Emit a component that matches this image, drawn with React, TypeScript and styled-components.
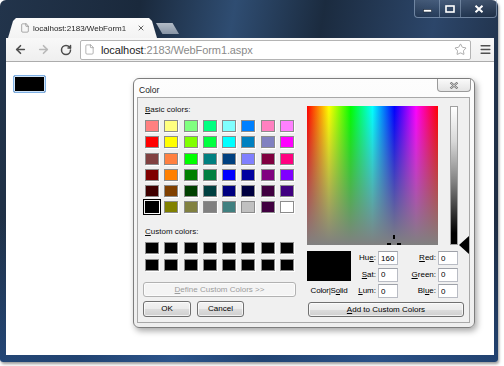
import { Fragment } from 'react';
import styled, { createGlobalStyle } from 'styled-components';
import { ArrowLeft, ArrowRight, RotateCw, Star, File, Menu, X } from 'lucide-react';

const GlobalStyle = createGlobalStyle`
  html, body {
    margin: 0;
    padding: 0;
    background: #fff;
  }
  body {
    font-family: "Liberation Sans", Arial, sans-serif;
  }
`;

const basicColors = [
  '#FF8080', '#FFFF80', '#80FF80', '#00FF80', '#80FFFF', '#0080FF', '#FF80C0', '#FF80FF',
  '#FF0000', '#FFFF00', '#80FF00', '#00FF40', '#00FFFF', '#0080C0', '#8080C0', '#FF00FF',
  '#804040', '#FF8040', '#00FF00', '#008080', '#004080', '#8080FF', '#800040', '#FF0080',
  '#800000', '#FF8000', '#008000', '#008040', '#0000FF', '#0000A0', '#800080', '#8000FF',
  '#400000', '#804000', '#004000', '#004040', '#000080', '#000040', '#400040', '#400080',
  '#000000', '#808000', '#808040', '#808080', '#408080', '#C0C0C0', '#400040', '#FFFFFF',
];

const Screen = styled.div`
  width: 504px;
  height: 366px;
  overflow: hidden;
  background: #fff;
`;

const Window = styled.div`
  width: 498px;
  height: 362px;
  box-sizing: border-box;
  display: flex;
  flex-direction: column;
  padding: 0 4px 7px 6px;
  border-radius: 6px 6px 3px 3px;
  background:
    linear-gradient(180deg, rgba(0, 0, 0, 0) 60%, rgba(40, 90, 160, 0.55) 100%),
    linear-gradient(100deg, #22344b 0%, #1a293c 25%, #2f4d72 42%, #1b2b3f 58%, #2c466a 78%, #1a2638 100%);
  box-shadow: 1px 2px 3px rgba(0, 0, 0, 0.4);
`;

const TopStrip = styled.div`
  height: 38px;
  display: flex;
  align-items: flex-start;
`;

const Tabs = styled.div`
  display: flex;
  align-items: flex-end;
  height: 100%;
  padding-left: 2px;
`;

const Tab = styled.div`
  width: 149px;
  height: 20px;
  box-sizing: border-box;
  display: flex;
  align-items: center;
  padding: 0 12px 0 12px;
  gap: 2px;
  background: linear-gradient(#fbfbfb, #f3f3f3);
  clip-path: polygon(0 100%, 5px 3px, 8px 0, calc(100% - 8px) 0, calc(100% - 5px) 3px, 100% 100%);
  color: #7a7a7a;
`;

const TabTitle = styled.span`
  flex: 1;
  min-width: 0;
  overflow: hidden;
  font-size: 8px;
  color: #1e1e1e;
  white-space: nowrap;
  padding-left: 1px;
  -webkit-mask-image: linear-gradient(90deg, #000 88%, rgba(0, 0, 0, 0.2) 100%);
  mask-image: linear-gradient(90deg, #000 88%, rgba(0, 0, 0, 0.2) 100%);
`;

const TabClose = styled.span`
  display: flex;
  flex-shrink: 0;
  color: #444;
`;

const NewTab = styled.div`
  width: 23px;
  height: 11px;
  margin: 0 0 4px -1px;
  background: linear-gradient(#b3bcc7, #8794a5);
  clip-path: polygon(0 0, 72% 0, 100% 100%, 28% 100%);
`;

const Controls = styled.div`
  display: flex;
  margin-left: auto;
  margin-right: -3px;
  height: 17px;
  border: 1px solid rgba(170, 190, 215, 0.55);
  border-top: none;
  border-radius: 0 0 4px 4px;
  overflow: hidden;
`;

const Control = styled.div<{ $w: number }>`
  width: ${(p) => p.$w}px;
  display: flex;
  align-items: center;
  justify-content: center;
  background: linear-gradient(rgba(255, 255, 255, 0.12), rgba(0, 0, 0, 0.15));
  & + & {
    border-left: 1px solid rgba(170, 190, 215, 0.45);
  }
`;

const Toolbar = styled.div`
  height: 24px;
  box-sizing: border-box;
  display: flex;
  align-items: center;
  padding-left: 8px;
  background: linear-gradient(#f8f8f8, #efefef);
  border-bottom: 1px solid #acacac;
  gap: 10px;
`;

const NavIcon = styled.span<{ $muted?: boolean }>`
  display: flex;
  color: ${(p) => (p.$muted ? '#b8b8b8' : '#4d4d4d')};
`;

const Omnibox = styled.div`
  width: 391px;
  height: 20px;
  box-sizing: border-box;
  margin-left: -2px;
  display: flex;
  align-items: center;
  padding: 0 3px 0 3px;
  gap: 6px;
  background: #fff;
  border: 1px solid #b4b4b4;
  border-radius: 2px;
  color: #8a8a8a;
`;

const Url = styled.span`
  font-size: 11px;
  color: #8a8a8a;
  letter-spacing: -0.1px;
  b {
    font-weight: normal;
    color: #1e1e1e;
  }
`;

const StarSlot = styled.span`
  display: flex;
  margin-left: auto;
  color: #8a8a8a;
`;

const MenuSlot = styled.span`
  display: flex;
  margin-left: -2px;
  color: #505050;
`;

const Content = styled.div`
  flex: 1;
  position: relative;
  background: #fff;
  padding: 13px 0 0 7px;
`;

const ColorField = styled.div`
  width: 33px;
  height: 18px;
  box-sizing: border-box;
  border: 1px solid #7fb0e4;
  border-radius: 2px;
  background: #000;
  box-shadow: inset 0 0 0 1px #cfe3f7;
`;

const Dialog = styled.div`
  position: absolute;
  left: 127px;
  top: 16px;
  width: 342px;
  height: 250px;
  box-sizing: border-box;
  display: flex;
  flex-direction: column;
  padding: 0 4px 4px 3px;
  border: 1px solid #7d7d7d;
  border-radius: 6px;
  background: linear-gradient(#fdfdfd, #eeeeee);
  box-shadow: 2px 3px 6px rgba(0, 0, 0, 0.35);
  font-size: 8px;
  color: #000;
`;

const TitleBar = styled.div`
  height: 18px;
  display: flex;
  align-items: flex-start;
`;

const Title = styled.span`
  font-size: 8.5px;
  color: #222;
  padding: 6px 0 0 2px;
`;

const CloseBtn = styled.div`
  margin-left: auto;
  margin-right: -1px;
  width: 34px;
  height: 13px;
  box-sizing: border-box;
  display: flex;
  align-items: center;
  justify-content: center;
  border: 1px solid #9a9a9a;
  border-top: none;
  border-radius: 0 0 4px 4px;
  background: linear-gradient(#fafafa, #e4e4e4);
`;

const Panel = styled.div`
  flex: 1;
  box-sizing: border-box;
  display: flex;
  gap: 11px;
  padding-left: 7px;
  border: 1px solid #a8a8a8;
  background: #f0f0f0;
`;

const LeftCol = styled.div`
  width: 151px;
  display: flex;
  flex-direction: column;
  padding-top: 7px;
`;

const Caption = styled.div`
  height: 10px;
  line-height: 10px;
  font-size: 8px;
  color: #111;
`;

const Mn = styled.span`
  text-decoration: underline;
`;

const Swatches = styled.div<{ $after: number }>`
  display: grid;
  grid-template-columns: repeat(8, 14px);
  grid-auto-rows: 12px;
  column-gap: 5.3px;
  row-gap: 4.3px;
  margin-top: 5px;
  margin-bottom: ${(p) => p.$after}px;
`;

const Swatch = styled.div<{ $c: string; $sel?: boolean }>`
  box-sizing: border-box;
  background: ${(p) => p.$c};
  border: 1px solid ${(p) => (p.$sel ? '#000' : '#8c8c8c')};
  box-shadow: 1px 1px 0 #ffffff;
  outline: ${(p) => (p.$sel ? '1px solid #000' : 'none')};
  outline-offset: 1px;
`;

const Btn = styled.button<{ $w: number; $h?: number }>`
  width: ${(p) => p.$w}px;
  height: ${(p) => p.$h ?? 16}px;
  box-sizing: border-box;
  padding: 0;
  font-family: "Liberation Sans", Arial, sans-serif;
  font-size: 8px;
  color: #000;
  border: 1px solid #707070;
  border-radius: 3px;
  background: linear-gradient(#f3f3f3 0%, #ebebeb 50%, #dddddd 51%, #cfcfcf 100%);
  box-shadow: inset 0 0 0 1px rgba(255, 255, 255, 0.7);
  &:disabled {
    color: #9c9c9c;
    border-color: #b2b2b2;
    background: #f4f4f4;
  }
`;

const ButtonStack = styled.div`
  display: flex;
  flex-direction: column;
  gap: 4px;
  margin-left: -2px;
`;

const ButtonRow = styled.div`
  display: flex;
  gap: 6px;
`;

const RightCol = styled.div`
  width: 162px;
  display: flex;
  flex-direction: column;
  padding-top: 8px;
`;

const SpectrumRow = styled.div`
  height: 139px;
  display: flex;
`;

const Spectrum = styled.div`
  position: relative;
  width: 131px;
  height: 139px;
  background:
    linear-gradient(180deg, rgba(128, 128, 128, 0) 0%, #808080 100%),
    linear-gradient(90deg, #ff0000 0%, #ffff00 16.7%, #00ff00 33.3%, #00ffff 50%, #0000ff 66.7%, #ff00ff 83.3%, #ff0000 100%);
`;

const Crosshair = styled.svg`
  position: absolute;
  left: 80px;
  bottom: 0;
`;

const LumBar = styled.div`
  width: 8px;
  margin-left: 12px;
  box-sizing: border-box;
  border: 1px solid #a0a0a0;
  background: linear-gradient(#ffffff 0%, #d8d8d8 25%, #808080 55%, #000 92%, #000 100%);
`;

const ArrowSlot = styled.div`
  position: relative;
  width: 11px;
`;

const LumArrow = styled.svg`
  position: absolute;
  left: 1px;
  bottom: -9px;
`;

const Fields = styled.div`
  display: grid;
  grid-template-columns: 44px 27px 20px 40px 20px;
  grid-template-rows: repeat(3, 14px);
  row-gap: 2.5px;
  margin-top: 6px;
`;

const Preview = styled.div`
  grid-row: 1 / span 2;
  grid-column: 1;
  background: #000;
  margin-bottom: 0.5px;
`;

const PreviewLabel = styled.div`
  grid-row: 3;
  grid-column: 1;
  text-align: center;
  line-height: 14px;
  font-size: 8px;
  letter-spacing: -0.2px;
  white-space: nowrap;
`;

const FieldLabel = styled.label<{ $row: number; $col: number }>`
  grid-row: ${(p) => p.$row};
  grid-column: ${(p) => p.$col};
  text-align: right;
  padding-right: 2px;
  line-height: 14px;
  font-size: 8px;
`;

const NumBox = styled.input<{ $row: number; $col: number }>`
  grid-row: ${(p) => p.$row};
  grid-column: ${(p) => p.$col};
  width: 20px;
  height: 14px;
  box-sizing: border-box;
  padding: 0 2px;
  margin: 0;
  border: 1px solid #b9bcc4;
  border-top-color: #9ea1a8;
  background: #fff;
  font-family: "Liberation Sans", Arial, sans-serif;
  font-size: 8px;
  color: #000;
  outline: none;
`;

const AddRow = styled.div`
  margin-top: 4px;
  padding-left: 1px;
`;

const fields = [
  { a: <>Hu<Mn>e</Mn>:</>, av: '160', b: <><Mn>R</Mn>ed:</>, bv: '0' },
  { a: <><Mn>S</Mn>at:</>, av: '0', b: <><Mn>G</Mn>reen:</>, bv: '0' },
  { a: <><Mn>L</Mn>um:</>, av: '0', b: <>Bl<Mn>u</Mn>e:</>, bv: '0' },
];

export default function App() {
  return (
    <Screen>
      <GlobalStyle />
      <Window>
        <TopStrip>
          <Tabs>
            <Tab>
              <File size={10} strokeWidth={1.5} />
              <TabTitle>localhost:2183/WebForm1</TabTitle>
              <TabClose>
                <X size={8} strokeWidth={2.5} />
              </TabClose>
            </Tab>
            <NewTab />
          </Tabs>
          <Controls>
            <Control $w={24}>
              <svg width="9" height="8" viewBox="0 0 9 8">
                <rect x="0.5" y="4.5" width="8" height="2.5" fill="#fff" stroke="#1a2535" strokeWidth="0.6" />
              </svg>
            </Control>
            <Control $w={20}>
              <svg width="10" height="8" viewBox="0 0 10 8">
                <rect x="1" y="1" width="8" height="6" fill="none" stroke="#fff" strokeWidth="1.6" />
              </svg>
            </Control>
            <Control $w={35}>
              <svg width="10" height="8" viewBox="0 0 10 8">
                <path d="M1.5 0.8 L8.5 7.2 M8.5 0.8 L1.5 7.2" stroke="#fff" strokeWidth="2" />
              </svg>
            </Control>
          </Controls>
        </TopStrip>
        <Toolbar>
          <NavIcon>
            <ArrowLeft size={13} strokeWidth={3} />
          </NavIcon>
          <NavIcon $muted>
            <ArrowRight size={13} strokeWidth={3} />
          </NavIcon>
          <NavIcon>
            <RotateCw size={12} strokeWidth={3} />
          </NavIcon>
          <Omnibox>
            <File size={11} strokeWidth={1.4} />
            <Url>
              <b>localhost</b>:2183/WebForm1.aspx
            </Url>
            <StarSlot>
              <Star size={13} strokeWidth={1.3} />
            </StarSlot>
          </Omnibox>
          <MenuSlot>
            <Menu size={13} strokeWidth={2.8} />
          </MenuSlot>
        </Toolbar>
        <Content>
          <ColorField />
          <Dialog>
            <TitleBar>
              <Title>Color</Title>
              <CloseBtn>
                <svg width="10" height="7" viewBox="0 0 10 7">
                  <path d="M1.5 0.5 L8.5 6.5 M8.5 0.5 L1.5 6.5" stroke="#6b6b6b" strokeWidth="2.2" />
                  <path d="M1.5 0.5 L8.5 6.5 M8.5 0.5 L1.5 6.5" stroke="#f4f4f4" strokeWidth="0.8" />
                </svg>
              </CloseBtn>
            </TitleBar>
            <Panel>
              <LeftCol>
                <Caption>
                  <Mn>B</Mn>asic colors:
                </Caption>
                <Swatches $after={14}>
                  {basicColors.map((c, i) => (
                    <Swatch key={i} $c={c} $sel={i === 40} />
                  ))}
                </Swatches>
                <Caption>
                  <Mn>C</Mn>ustom colors:
                </Caption>
                <Swatches $after={11}>
                  {Array.from({ length: 16 }, (_, i) => (
                    <Swatch key={i} $c="#000" />
                  ))}
                </Swatches>
                <ButtonStack>
                  <Btn $w={153} $h={15} disabled>
                    <Mn>D</Mn>efine Custom Colors &gt;&gt;
                  </Btn>
                  <ButtonRow>
                    <Btn $w={48}>OK</Btn>
                    <Btn $w={47}>Cancel</Btn>
                  </ButtonRow>
                </ButtonStack>
              </LeftCol>
              <RightCol>
                <SpectrumRow>
                  <Spectrum>
                    <Crosshair width="14" height="10" viewBox="0 0 14 10">
                      <rect x="6" y="0" width="2" height="4" fill="#000" />
                      <rect x="0" y="8" width="4" height="2" fill="#000" />
                      <rect x="10" y="8" width="4" height="2" fill="#000" />
                    </Crosshair>
                  </Spectrum>
                  <LumBar />
                  <ArrowSlot>
                    <LumArrow width="10" height="18" viewBox="0 0 10 18">
                      <polygon points="0,9 10,0 10,18" fill="#000" />
                    </LumArrow>
                  </ArrowSlot>
                </SpectrumRow>
                <Fields>
                  <Preview />
                  <PreviewLabel>
                    Color|S<Mn>o</Mn>lid
                  </PreviewLabel>
                  {fields.map((f, i) => (
                    <Fragment key={i}>
                      <FieldLabel $row={i + 1} $col={2}>{f.a}</FieldLabel>
                      <NumBox $row={i + 1} $col={3} readOnly value={f.av} />
                      <FieldLabel $row={i + 1} $col={4}>{f.b}</FieldLabel>
                      <NumBox $row={i + 1} $col={5} readOnly value={f.bv} />
                    </Fragment>
                  ))}
                </Fields>
                <AddRow>
                  <Btn $w={156} $h={15}>
                    <Mn>A</Mn>dd to Custom Colors
                  </Btn>
                </AddRow>
              </RightCol>
            </Panel>
          </Dialog>
        </Content>
      </Window>
    </Screen>
  );
}
